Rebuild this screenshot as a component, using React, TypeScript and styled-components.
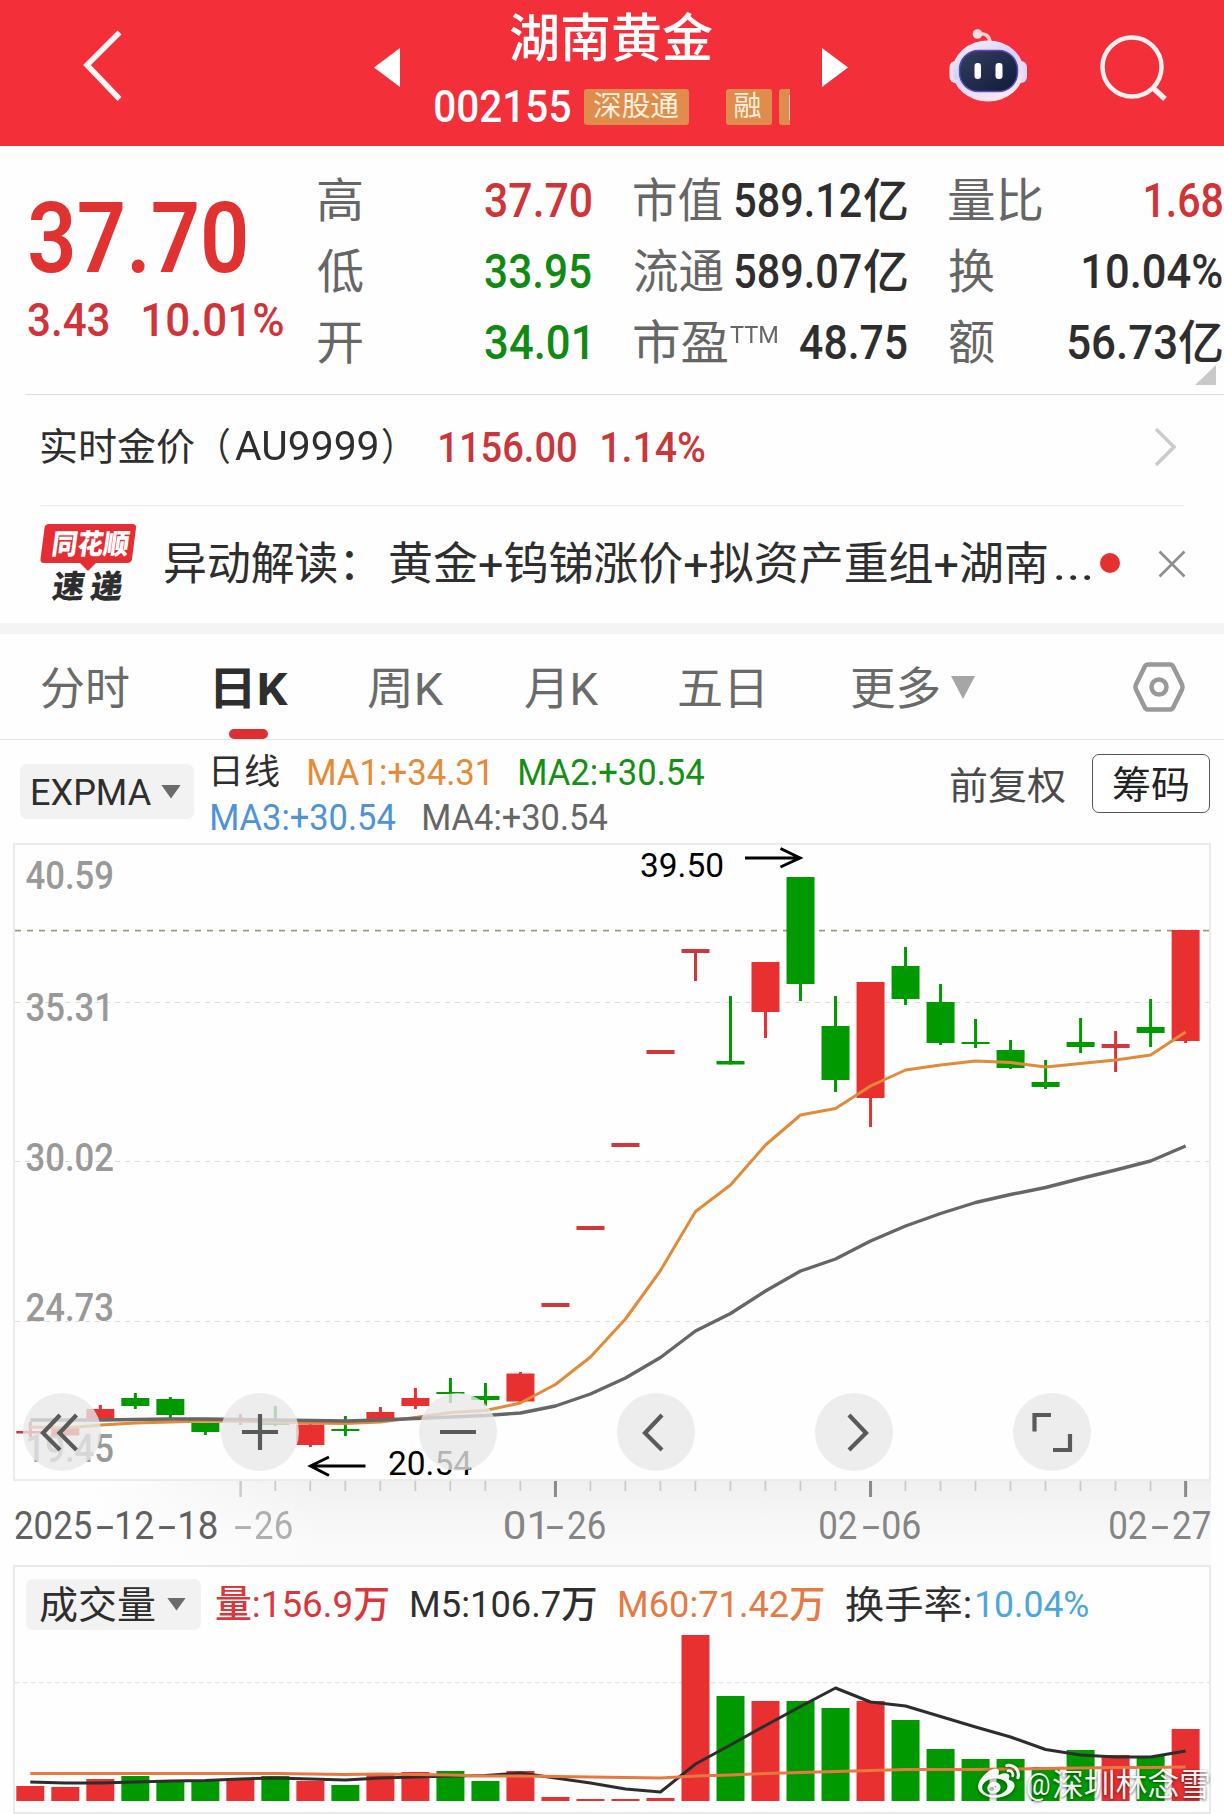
import React, { useLayoutEffect, useRef, useState } from 'react';
import styled, { createGlobalStyle } from 'styled-components';
import { FaWeibo } from 'react-icons/fa';

const FONT = `Roboto, "Noto Sans CJK SC", sans-serif`;
const RED = '#e93030';
const GREEN = '#009a00';

const GlobalStyle = createGlobalStyle`
  body { margin: 0; background: #fff; }
  * { box-sizing: border-box; }
  svg { display: block; flex: none; }
`;

/* ---------- condensed text: squeezes a line of text to a given ink width ---------- */

const FitBox = styled.span<{ $w: number; $size: number; $weight: number; $color: string; $ml: number; $mr: number; $dy: number }>`
  display: block;
  flex: none;
  width: ${(p) => p.$w}px;
  height: ${(p) => Math.round(p.$size * 1.2)}px;
  line-height: ${(p) => Math.round(p.$size * 1.2)}px;
  margin: ${(p) => p.$dy}px ${(p) => p.$mr}px 0 ${(p) => p.$ml}px;
  font-family: ${FONT};
  font-size: ${(p) => p.$size}px;
  font-weight: ${(p) => p.$weight};
  color: ${(p) => p.$color};
`;
const FitInner = styled.span`
  display: inline-block;
  white-space: pre;
  vertical-align: top;
  transform-origin: 0 50%;
`;

type FitProps = { w: number; size: number; weight?: number; color?: string; ml?: number; mr?: number; dy?: number; children: string };

function Fit({ w, size, weight = 400, color = '#2e2e2e', ml = 0, mr = 0, dy = 0, children }: FitProps) {
  const ref = useRef<HTMLSpanElement>(null);
  const [transform, setTransform] = useState('none');
  useLayoutEffect(() => {
    const ctx = document.createElement('canvas').getContext('2d');
    if (!ctx || !ref.current) return;
    ctx.font = `${weight} ${size}px ${FONT}`;
    const m = ctx.measureText(children);
    const k = w / (m.actualBoundingBoxLeft + m.actualBoundingBoxRight);
    setTransform(`translateX(${m.actualBoundingBoxLeft * k}px) scaleX(${k})`);
  }, [w, size, weight, children]);
  return (
    <FitBox $w={w} $size={size} $weight={weight} $color={color} $ml={ml} $mr={mr} $dy={dy}>
      <FitInner ref={ref} style={{ transform }}>{children}</FitInner>
    </FitBox>
  );
}

/* ---------- shared pieces ---------- */

const Page = styled.div`
  width: 1224px;
  height: 1814px;
  overflow: hidden;
  display: flex;
  flex-direction: column;
  background: #fefefe;
  position: relative;
`;
const Spacer = styled.div`flex: 1;`;

const Caret = styled.i<{ $w: number; $h: number; $color: string; $ml: number; $up?: number }>`
  flex: none;
  width: ${(p) => p.$w}px;
  height: ${(p) => p.$h}px;
  margin: 0 0 ${(p) => p.$up ?? 0}px ${(p) => p.$ml}px;
  background: ${(p) => p.$color};
  clip-path: polygon(0 0, 100% 0, 50% 100%);
`;

/* ---------- header ---------- */

const Header = styled.header`
  flex: none;
  height: 146px;
  padding: 0 55px 14px 80px;
  display: flex;
  align-items: center;
  background: #f32f39;
`;
const StepArrow = styled.i<{ $dir: 'left' | 'right'; $ml: number }>`
  flex: none;
  width: 26px;
  height: 39px;
  margin: 3px 0 0 ${(p) => p.$ml}px;
  background: #fff;
  clip-path: ${(p) => (p.$dir === 'left' ? 'polygon(100% 0, 100% 100%, 0 50%)' : 'polygon(0 0, 0 100%, 100% 50%)')};
`;
const StockBlock = styled.div`
  width: 361px;
  margin: 11px 0 0 29px;
  padding-left: 6px;
  display: flex;
  flex-direction: column;
  gap: 9px;
  overflow: hidden;
`;
const StockName = styled.div`padding-left: 75px;`;
const CodeRow = styled.div`
  display: flex;
  align-items: center;
  height: 54px;
`;
const Tag = styled.span<{ $w: number; $ml: number }>`
  flex: none;
  width: ${(p) => p.$w}px;
  height: 36px;
  margin-left: ${(p) => p.$ml}px;
  border-radius: 3px;
  background: #e08c4c;
  display: flex;
  align-items: center;
`;
const TagEdge = styled.i`
  width: 2px;
  height: 25px;
  margin-left: 10px;
  background: #fbe8cf;
`;
const SearchIcon = styled.svg`
  margin: 3px 0 0 71px;
`;

function Robot() {
  return (
    <svg width="80" height="80" viewBox="0 0 80 80">
      <defs>
        <linearGradient id="shell" x1="0" y1="0" x2="0.5" y2="1">
          <stop offset="0" stopColor="#fff1f3" />
          <stop offset="0.5" stopColor="#d5d2fb" />
          <stop offset="1" stopColor="#fbe6f0" />
        </linearGradient>
        <linearGradient id="face" x1="0" y1="0" x2="1" y2="1">
          <stop offset="0" stopColor="#34405f" />
          <stop offset="1" stopColor="#10193a" />
        </linearGradient>
      </defs>
      <path d="M30 8 Q41 6.500 42 16" fill="none" stroke="#fccdd2" strokeWidth="3.600" strokeLinecap="round" />
      <circle cx="29.500" cy="8" r="4.800" fill="#fddfe2" />
      <rect x="1.500" y="35" width="12" height="22" rx="6" fill="#f9e2ee" />
      <rect x="67" y="35" width="12" height="22" rx="6" fill="#e2d7f7" />
      <ellipse cx="40" cy="45" rx="35.500" ry="30.500" fill="url(#shell)" />
      <rect x="11.500" y="24.500" width="58" height="41" rx="19" fill="url(#face)" stroke="#574bb5" strokeWidth="1.500" />
      <rect x="26.500" y="37" width="6.500" height="16" rx="3" fill="#fff" />
      <rect x="47.500" y="37" width="7" height="16" rx="3" fill="#fff" />
    </svg>
  );
}

function TopBar() {
  return (
    <Header>
      <svg width="45" height="74" viewBox="0 0 45 74" fill="none" stroke="#fff5f4" strokeWidth="5.500">
        <path d="M39.500 3.500 L7 36 L39.500 70" />
      </svg>
      <StepArrow $dir="left" $ml={249} />
      <StockBlock>
        <StockName><Fit w={202} size={52} weight={500} color="#fff">湖南黄金</Fit></StockName>
        <CodeRow>
          <Fit w={135} size={45} weight={500} color="#fff">002155</Fit>
          <Tag $w={105} $ml={14}><Fit w={85} size={28} color="#fdf0dc" ml={10}>深股通</Fit></Tag>
          <Tag $w={46} $ml={36.5}><Fit w={27} size={28} color="#fdf0dc" ml={9}>融</Fit></Tag>
          <Tag $w={46} $ml={7}><TagEdge /></Tag>
        </CodeRow>
      </StockBlock>
      <StepArrow $dir="right" $ml={32} />
      <Spacer />
      <Robot />
      <SearchIcon width="70" height="70" viewBox="0 0 70 70" fill="none" stroke="#fff0ef" strokeWidth="4.500">
        <circle cx="33" cy="34" r="29.500" />
        <path d="M53 54 L66 66" strokeWidth="5.500" />
      </SearchIcon>
    </Header>
  );
}

/* ---------- quote ---------- */

const Quote = styled.section`
  flex: none;
  height: 248px;
  padding: 19px 2px 0 28px;
  display: flex;
  align-items: flex-start;
`;
const PriceCol = styled.div`
  width: 290px;
  padding-top: 15px;
`;
const ChangeRow = styled.div`
  display: flex;
  margin-top: -6px;
`;
const StatCol = styled.div<{ $w: number; $ml: number }>`
  flex: none;
  width: ${(p) => p.$w}px;
  margin-left: ${(p) => p.$ml}px;
`;
const StatRow = styled.div`
  height: 71px;
  display: flex;
  align-items: center;
`;
const Corner = styled.i`
  position: absolute;
  right: 8px;
  top: 365px;
  width: 21px;
  height: 20px;
  background: #c9c9c9;
  clip-path: polygon(100% 0, 100% 100%, 0 100%);
`;
const Line = styled.hr<{ $l: number; $r: number; $c: string }>`
  flex: none;
  width: auto;
  height: 1px;
  border: 0;
  margin: 0 ${(p) => p.$r}px 0 ${(p) => p.$l}px;
  background: ${(p) => p.$c};
`;

type Stat = { label: string; lw: number; value: string; vw: number; color?: string; unit?: boolean; sup?: string; pad?: number };
const UP = '#d03338';
const DOWN = '#118a14';
const STATS: { w: number; ml: number; rows: Stat[] }[] = [
  { w: 273, ml: 0, rows: [
    { label: '高', lw: 44, value: '37.70', vw: 106, color: UP },
    { label: '低', lw: 45, value: '33.95', vw: 106, color: DOWN },
    { label: '开', lw: 44, value: '34.01', vw: 102, color: DOWN, pad: 4 },
  ] },
  { w: 273, ml: 43, rows: [
    { label: '市值', lw: 88, value: '589.12', vw: 126, unit: true },
    { label: '流通', lw: 89, value: '589.07', vw: 126, unit: true },
    { label: '市盈', lw: 93, value: '48.75', vw: 107, sup: 'TTM' },
  ] },
  { w: 273, ml: 42, rows: [
    { label: '量比', lw: 93, value: '1.68', vw: 77, color: UP },
    { label: '换', lw: 45, value: '10.04%', vw: 139 },
    { label: '额', lw: 45, value: '56.73', vw: 108, unit: true },
  ] },
];

function QuotePanel() {
  return (
    <Quote>
      <PriceCol>
        <Fit w={216} size={98} weight={600} color="#e13232" ml={2}>37.70</Fit>
        <ChangeRow>
          <Fit w={81} size={47} weight={500} color={UP}>3.43</Fit>
          <Fit w={140} size={47} weight={500} color={UP} ml={34}>10.01%</Fit>
        </ChangeRow>
      </PriceCol>
      {STATS.map((col, i) => (
        <StatCol key={i} $w={col.w} $ml={col.ml}>
          {col.rows.map((r) => (
            <StatRow key={r.label}>
              <Fit w={r.lw} size={47} color="#666">{r.label}</Fit>
              {r.sup && <Fit w={47} size={24} color="#666" ml={3} dy={-14}>{r.sup}</Fit>}
              <Spacer />
              <Fit w={r.vw} size={48} weight={500} color={r.color} mr={r.pad}>{r.value}</Fit>
              {r.unit && <Fit w={43} size={47} weight={500} ml={3}>亿</Fit>}
            </StatRow>
          ))}
        </StatCol>
      ))}
      <Corner />
    </Quote>
  );
}

/* ---------- gold price and news ---------- */

const GoldRow = styled.section`
  flex: none;
  height: 110px;
  padding: 0 47px 7px 41px;
  display: flex;
  align-items: center;
`;
const NewsRow = styled.section`
  flex: none;
  height: 117px;
  padding: 0 38px 0 40px;
  display: flex;
  align-items: center;
`;
const Dot = styled.i`
  width: 20px;
  height: 20px;
  margin: 0 0 3px 9px;
  border-radius: 50%;
  background: #e63030;
`;
const Band = styled.div`
  flex: none;
  height: 11px;
  background: #f4f4f4;
`;
const LogoArt = styled.svg`
  margin-bottom: 6px;
  overflow: visible;
`;

function NewsLogo() {
  return (
    <LogoArt width="97" height="82" viewBox="0 0 97 82" fontFamily={FONT} fontWeight={900}>
      <path d="M9 3 H92 Q96.500 3 96 7 L92 38 Q91.500 42 87 42 H56 L48 50 L40 42 H4 Q0 42 0.500 38 L4.500 7 Q5 3 9 3 Z" fill="#e42e33" />
      <g transform="skewX(-8)">
        <text x="15.500" y="33" fontSize="28" fill="#fff" textLength="77" lengthAdjust="spacingAndGlyphs">同花顺</text>
        <text x="22" y="77" fontSize="32" fill="#2e2e2e" textLength="32" lengthAdjust="spacingAndGlyphs">速</text>
        <text x="60" y="77" fontSize="32" fill="#2e2e2e" textLength="32" lengthAdjust="spacingAndGlyphs">递</text>
      </g>
    </LogoArt>
  );
}

function InfoRows() {
  return (
    <>
      <GoldRow>
        <Fit w={153} size={38}>实时金价</Fit>
        <Fit w={10} size={38} ml={26}>（</Fit>
        <Fit w={142} size={40} ml={5} dy={1}>AU9999</Fit>
        <Fit w={10} size={38} ml={5}>）</Fit>
        <Fit w={136} size={42} weight={500} color="#c9373b" ml={48} dy={3}>1156.00</Fit>
        <Fit w={103} size={42} weight={500} color="#c9373b" ml={26} dy={3}>1.14%</Fit>
        <Spacer />
        <svg width="23" height="40" viewBox="0 0 23 40" fill="none" stroke="#cbcbcb" strokeWidth="3.500">
          <path d="M2 2 L20 20 L2 38" />
        </svg>
      </GoldRow>
      <Line $l={40} $r={40} $c="#ebebeb" />
      <NewsRow>
        <NewsLogo />
        <Fit w={188} size={45} ml={28} dy={1}>异动解读：</Fit>
        <Fit w={657} size={45} ml={37} dy={1}>黄金+钨锑涨价+拟资产重组+湖南</Fit>
        <Fit w={35} size={45} ml={9} dy={1}>...</Fit>
        <Dot />
        <Spacer />
        <svg width="28" height="30" viewBox="0 0 28 30" stroke="#8e8e8e" strokeWidth="2.600">
          <path d="M1.500 1.500 L26.500 26.500 M26.500 1.500 L1.500 26.500" />
        </svg>
      </NewsRow>
      <Band />
    </>
  );
}

/* ---------- tabs ---------- */

const Tabs = styled.nav`
  flex: none;
  height: 105px;
  padding: 0 38px 0 41px;
  display: flex;
  align-items: stretch;
`;
const Tab = styled.div<{ $ml: number }>`
  margin-left: ${(p) => p.$ml}px;
  display: flex;
  flex-direction: column;
  align-items: center;
  padding-top: 29px;
`;
const TabRow = styled.div`
  display: flex;
  align-items: center;
`;
const ActiveMark = styled.i`
  width: 39px;
  height: 10px;
  margin: 12px 6px 0 0;
  border-radius: 5px;
  background: #dd3033;
`;
const Settings = styled.div`
  padding-top: 26px;
`;

function TabBar() {
  return (
    <Tabs>
      <Tab $ml={0}><Fit w={88} size={45} color="#6a6a6a">分时</Fit></Tab>
      <Tab $ml={86}><Fit w={73} size={45} weight={700}>日K</Fit><ActiveMark /></Tab>
      <Tab $ml={80}><Fit w={76} size={45} color="#6a6a6a">周K</Fit></Tab>
      <Tab $ml={81}><Fit w={74} size={45} color="#6a6a6a">月K</Fit></Tab>
      <Tab $ml={80}><Fit w={83} size={45} color="#6a6a6a">五日</Fit></Tab>
      <Tab $ml={90}>
        <TabRow>
          <Fit w={87} size={45} color="#6a6a6a">更多</Fit>
          <Caret $w={24} $h={23} $color="#a6a6a6" $ml={12} $up={5} />
        </TabRow>
      </Tab>
      <Spacer />
      <Settings>
        <svg width="54" height="54" viewBox="0 0 54 54" fill="none" stroke="#999" strokeWidth="4.500" strokeLinejoin="round">
          <path d="M16 4.500 H38 Q40 4.500 41.200 6.500 L50 24.500 Q51.200 27 50 29.500 L41.200 47.500 Q40 49.500 38 49.500 H16 Q14 49.500 12.800 47.500 L4 29.500 Q2.800 27 4 24.500 L12.800 6.500 Q14 4.500 16 4.500 Z" />
          <circle cx="27" cy="27" r="7.500" />
        </svg>
      </Settings>
    </Tabs>
  );
}

/* ---------- indicator strip ---------- */

const Indicators = styled.section`
  flex: none;
  height: 103px;
  padding: 0 14px 0 20px;
  display: flex;
  align-items: flex-start;
`;
const Picker = styled.button<{ $w: number; $h: number; $mt: number; $pl: number }>`
  flex: none;
  width: ${(p) => p.$w}px;
  height: ${(p) => p.$h}px;
  margin: ${(p) => p.$mt}px 0 0;
  padding: 0 0 0 ${(p) => p.$pl}px;
  border: 0;
  border-radius: 7px;
  background: #f2f2f2;
  display: flex;
  align-items: center;
`;
const Legend = styled.div`
  margin: 10px 0 0 18px;
`;
const LegendRow = styled.div`
  height: 45.5px;
  display: flex;
  align-items: center;
`;
const Adjust = styled.div`
  display: flex;
  align-items: center;
  gap: 27px;
  margin-top: 14px;
`;
const ChipButton = styled.button`
  width: 118px;
  height: 59px;
  padding: 2px 0 0 20px;
  border: 1.5px solid #555;
  border-radius: 7px;
  background: #fff;
`;

function IndicatorStrip() {
  return (
    <Indicators>
      <Picker $w={174} $h={55} $mt={24} $pl={12}>
        <Fit w={118} size={37} dy={3} ml={1}>EXPMA</Fit>
        <Caret $w={20} $h={14} $color="#6b6b6b" $ml={10} />
      </Picker>
      <Legend>
        <LegendRow>
          <Fit w={65} size={35} ml={2} dy={1}>日线</Fit>
          <Fit w={179} size={37} weight={450} color="#e58a35" ml={30}>MA1:+34.31</Fit>
          <Fit w={184} size={37} weight={450} color="#149014" ml={32}>MA2:+30.54</Fit>
        </LegendRow>
        <LegendRow>
          <Fit w={183} size={37} weight={450} color="#4f92d6">MA3:+30.54</Fit>
          <Fit w={183} size={37} weight={450} color="#666" ml={29}>MA4:+30.54</Fit>
        </LegendRow>
      </Legend>
      <Spacer />
      <Adjust>
        <Fit w={114} size={38} color="#4a4a4a" dy={4}>前复权</Fit>
        <ChipButton><Fit w={75} size={38} color="#222">筹码</Fit></ChipButton>
      </Adjust>
    </Indicators>
  );
}

/* ---------- chart data (canvas coordinates) ---------- */

// [direction, wick top, body top, body bottom, wick bottom]
type Candle = ['r' | 'g', number, number, number, number];
const CANDLES: Candle[] = [
  ['r', 1422, 1431, 1433.5, 1437], ['r', 1427, 1427.5, 1435.5, 1436], ['r', 1405, 1409, 1419, 1419], ['g', 1393, 1398, 1406, 1409],
  ['g', 1397, 1399, 1415, 1420], ['g', 1423, 1423, 1432, 1435], ['r', 1414, 1419, 1421, 1425], ['g', 1406, 1422, 1425, 1426],
  ['r', 1424, 1424.5, 1445, 1447], ['g', 1416, 1429, 1431, 1436], ['r', 1407, 1412, 1419, 1419], ['r', 1388, 1398, 1406, 1409],
  ['g', 1378, 1392, 1394, 1403], ['g', 1383, 1396, 1400, 1406], ['r', 1372, 1373.5, 1401.5, 1402], ['r', 1303, 1303, 1307, 1307],
  ['r', 1226, 1226, 1230, 1230], ['r', 1143, 1143, 1147, 1147], ['r', 1050, 1050, 1054, 1054], ['r', 949, 949, 953, 981],
  ['g', 996, 1061, 1064.5, 1064.5], ['r', 962, 962, 1012, 1038], ['g', 877, 877, 984, 1001], ['g', 996, 1026, 1080, 1092],
  ['r', 982, 982, 1098, 1127], ['g', 947, 966, 999, 1005], ['g', 984, 1002, 1043, 1045], ['g', 1019, 1042, 1044, 1048],
  ['g', 1040, 1050, 1068, 1069], ['g', 1060, 1082, 1087, 1089], ['g', 1018, 1042, 1047, 1053], ['r', 1031, 1044, 1048, 1072],
  ['g', 999, 1027, 1033, 1047], ['r', 930, 930, 1041, 1043],
];
const MA1 = [1427, 1428, 1425, 1423, 1422, 1421, 1421.5, 1422, 1423, 1423.5, 1422, 1417.5, 1412.5, 1410.5, 1403, 1384.5, 1357, 1319, 1270.5, 1211.5, 1185, 1145, 1115, 1108.5, 1086, 1070, 1065, 1061, 1062.5, 1067, 1063.5, 1060, 1055, 1032];
const MA4 = [1420, 1420, 1420, 1419.5, 1419, 1419, 1419.5, 1420, 1420.5, 1421, 1420, 1418.5, 1417, 1415.5, 1413, 1406, 1394, 1378, 1357.5, 1331, 1313.5, 1291, 1271, 1259, 1241, 1226, 1213.5, 1202.5, 1194.5, 1187.5, 1178.5, 1170, 1161, 1146];
const VOLUMES = [1786, 1787, 1779, 1776, 1781, 1780, 1780, 1776, 1781, 1785, 1773, 1772, 1771, 1781, 1771, 1797, 1799, 1799, 1798, 1635, 1696, 1701, 1701, 1708, 1701, 1720, 1749, 1759, 1759, 1767, 1750, 1755, 1756, 1729];
const M5 = [1782, 1783, 1783, 1782, 1781, 1780.5, 1779, 1778, 1779, 1780, 1778, 1777, 1776, 1775.5, 1773, 1778, 1783, 1789, 1792, 1764, 1745, 1725.5, 1706.5, 1688, 1702, 1706, 1716.5, 1727, 1737, 1749.5, 1755, 1757, 1757, 1751];
const M60 = [1773.5, 1773.5, 1773.5, 1773.5, 1773.5, 1773.5, 1773.5, 1773.5, 1774, 1774.5, 1774, 1774.5, 1775, 1776, 1776, 1776.5, 1777, 1777.5, 1778, 1776, 1775, 1773.5, 1772.5, 1771.5, 1770.5, 1769.5, 1769.5, 1769.5, 1769, 1768.5, 1768, 1767.5, 1767.5, 1767];

const cx = (i: number) => 30.3 + 35.01 * i;
const points = (ys: number[]) => ys.map((y, i) => `${cx(i)},${y}`).join(' ');
const tone = (d: 'r' | 'g') => (d === 'r' ? RED : GREEN);
const candleTone = ([d, , top, bottom]: Candle) => (d === 'r' && bottom - top < 5 ? '#d0373b' : tone(d));

const ChartPanel = styled.section`
  flex: none;
  position: relative;
  height: 638px;
  margin: 0 13px;
  border: 2px solid #ebebeb;
  background: #fefefe;
`;
const Controls = styled.div`
  position: absolute;
  left: 7.5px;
  top: 548px;
  display: flex;
  gap: 120px;
`;
const RoundButton = styled.button`
  width: 78px;
  height: 78px;
  padding: 0;
  border: 0;
  border-radius: 50%;
  background: rgba(232, 232, 232, 0.78);
`;
const CONTROL_PATHS = [
  'M37 22 L20 40 L37 57 M53.500 22 L36.500 40 L53.500 57',
  'M21 39 H57 M39 21 V57',
  'M21 39 H57',
  'M45 22 L28 40 L45 57',
  'M34 22 L51 40 L34 57',
  'M21.500 38.500 V22 H38 M57 41 V57 H40',
];

const SCALE: [string, number][] = [['40.59', 889], ['35.31', 1021], ['30.02', 1171], ['24.73', 1321], ['19.45', 1462]];

function PriceChart() {
  return (
    <ChartPanel>
      <svg width="1194" height="634" viewBox="15 845 1194 634" fontFamily={FONT}>
        {[1002.5, 1161.5, 1321.5].map((y) => (
          <path key={y} d={`M15 ${y} H1209`} stroke="#dcdcdc" strokeWidth="1.200" strokeDasharray="5 5" />
        ))}
        {SCALE.map(([t, y]) => (
          <text key={t} x="25.500" y={y} fontSize="39" fontWeight={500} fill="#999" textLength="88.500" lengthAdjust="spacingAndGlyphs">{t}</text>
        ))}
        <path d="M15 930.700 H1209" stroke="#a39c78" strokeWidth="1.800" strokeDasharray="6 6" />
        {CANDLES.map((c, i) => (
          <g key={i} fill={candleTone(c)}>
            <rect x={cx(i) - 1.5} y={c[1]} width="3" height={c[4] - c[1]} />
            <rect x={cx(i) - 14} y={c[2]} width="28" height={c[3] - c[2]} />
          </g>
        ))}
        <polyline points={points(MA1)} fill="none" stroke="#e08b3a" strokeWidth="3" strokeLinejoin="round" />
        <polyline points={points(MA4)} fill="none" stroke="#666" strokeWidth="3.400" strokeLinejoin="round" />
        <g fill="#000" fontSize="34">
          <text x="640" y="877" textLength="84" lengthAdjust="spacingAndGlyphs">39.50</text>
          <text x="388" y="1475" textLength="84" lengthAdjust="spacingAndGlyphs">20.54</text>
        </g>
        <g fill="none" stroke="#000" strokeWidth="3">
          <path d="M745 858 H799 M780.500 848.500 L800 858 L780.500 867" />
          <path d="M365.500 1466 H312 M329 1457 L310.500 1466 L329 1475.500" />
        </g>
      </svg>
      <Controls>
        {CONTROL_PATHS.map((d) => (
          <RoundButton key={d}>
            <svg width="78" height="78" viewBox="0 0 78 78" fill="none" stroke="#5a5a5a" strokeWidth="4.200"><path d={d} /></svg>
          </RoundButton>
        ))}
      </Controls>
    </ChartPanel>
  );
}

/* ---------- date axis ---------- */

const Axis = styled.section`
  flex: none;
  height: 84px;
  margin-right: 13px;
  background:
    linear-gradient(90deg, #fefefe 90px, rgba(254, 254, 254, 0) 330px),
    linear-gradient(180deg, #f0f0f0, #fafafa 75%);
`;
const Dates = styled.div`
  display: flex;
  align-items: center;
  height: 55px;
  padding: 0 1.5px 0 14.5px;
`;
const DateGroup = styled.div<{ $ml: number; $o?: number }>`
  display: flex;
  align-items: center;
  margin-left: ${(p) => p.$ml}px;
  opacity: ${(p) => p.$o ?? 1};
`;

function DateLabel({ text, ml, color, opacity }: { text: string; ml: number; color: string; opacity?: number }) {
  return (
    <DateGroup $ml={ml} $o={opacity}>
      {text.split(/(-)/).filter(Boolean).map((part, i) => (
        <Fit key={i} w={part === '-' ? 17 : part.length * 19.9 - 3} size={38.5} weight={450} color={color} ml={i ? 4.5 : 0}>{part}</Fit>
      ))}
    </DateGroup>
  );
}

function DateAxis() {
  return (
    <Axis>
      <svg width="1211" height="17" viewBox="0 0 1211 17">
        {Array.from({ length: 28 }, (_, n) => n + 6).map((i) => {
          const major = i === 15 || i === 24 || i === 33;
          return (
            <rect key={i} x={cx(i) - (major ? 1.5 : 1)} y="0" width={major ? 3 : i === 6 ? 2.5 : 1.8}
              height={major || i === 6 ? 16 : 10} fill={major ? '#8a8a8a' : '#cbcbcb'} />
          );
        })}
      </svg>
      <Dates>
        <DateLabel text="2025-12-18" ml={0} color="#606060" />
        <DateLabel text="-26" ml={17} color="#888" opacity={0.65} />
        <Spacer />
        <DateLabel text="01-26" ml={0} color="#858585" />
        <DateLabel text="02-06" ml={216} color="#858585" />
        <DateLabel text="02-27" ml={190} color="#858585" />
      </Dates>
    </Axis>
  );
}

/* ---------- volume ---------- */

const VolumePanel = styled.section`
  flex: none;
  position: relative;
  height: 249px;
  margin: 0 13px;
  border: 2px solid #e9e9e9;
  background: #fefefe;
`;
const VolumeHead = styled.div`
  height: 67px;
  padding: 7px 0 0 11px;
  display: flex;
  align-items: center;
`;
const Watermark = styled.div`
  position: absolute;
  right: 0;
  bottom: 8px;
  display: flex;
  align-items: center;
  color: rgba(255, 255, 255, 0.95);
  text-shadow: 0 1px 3px rgba(0, 0, 0, 0.65);
  svg { filter: drop-shadow(0 1px 2px rgba(0, 0, 0, 0.5)); }
`;

function VolumeChart() {
  return (
    <VolumePanel>
      <VolumeHead>
        <Picker $w={175} $h={51} $mt={0} $pl={14}>
          <Fit w={115} size={38} dy={2}>成交量</Fit>
          <Caret $w={19} $h={13} $color="#6b6b6b" $ml={12} />
        </Picker>
        <Fit w={172.5} size={37.5} weight={450} color="#d8383c" ml={15} dy={1}>量:156.9万</Fit>
        <Fit w={184} size={37.5} weight={450} ml={23.5} dy={1}>M5:106.7万</Fit>
        <Fit w={204} size={37.5} weight={450} color="#e57a45" ml={24} dy={1}>M60:71.42万</Fit>
        <Fit w={124} size={38} ml={22} dy={1}>换手率:</Fit>
        <Fit w={111} size={37.5} weight={450} color="#4ba6dc" ml={7} dy={1}>10.04%</Fit>
      </VolumeHead>
      <svg width="1194" height="178" viewBox="15 1634 1194 178">
        <path d="M15 1682.700 H1209" stroke="#e0e0e0" strokeWidth="1.200" strokeDasharray="4 4" />
        {VOLUMES.map((y, i) => (
          <rect key={i} x={cx(i) - 14} y={y} width="28" height={1801 - y} fill={tone(CANDLES[i][0])} />
        ))}
        <polyline points={points(M5)} fill="none" stroke="#2d2d2d" strokeWidth="3" strokeLinejoin="round" />
        <polyline points={points(M60)} fill="none" stroke="#e87840" strokeWidth="3" strokeLinejoin="round" />
      </svg>
      <Watermark>
        <FaWeibo size={42} />
        <Fit w={23} size={31} color="rgba(255,255,255,0.95)" ml={7} dy={4}>@</Fit>
        <Fit w={156} size={32} color="rgba(255,255,255,0.95)" ml={3} dy={6}>深圳林念雪</Fit>
      </Watermark>
    </VolumePanel>
  );
}

export default function App() {
  return (
    <Page>
      <GlobalStyle />
      <TopBar />
      <QuotePanel />
      <Line $l={26} $r={0} $c="#dcdcdc" />
      <InfoRows />
      <TabBar />
      <Line $l={0} $r={0} $c="#e4e4e4" />
      <IndicatorStrip />
      <PriceChart />
      <DateAxis />
      <VolumeChart />
    </Page>
  );
}
